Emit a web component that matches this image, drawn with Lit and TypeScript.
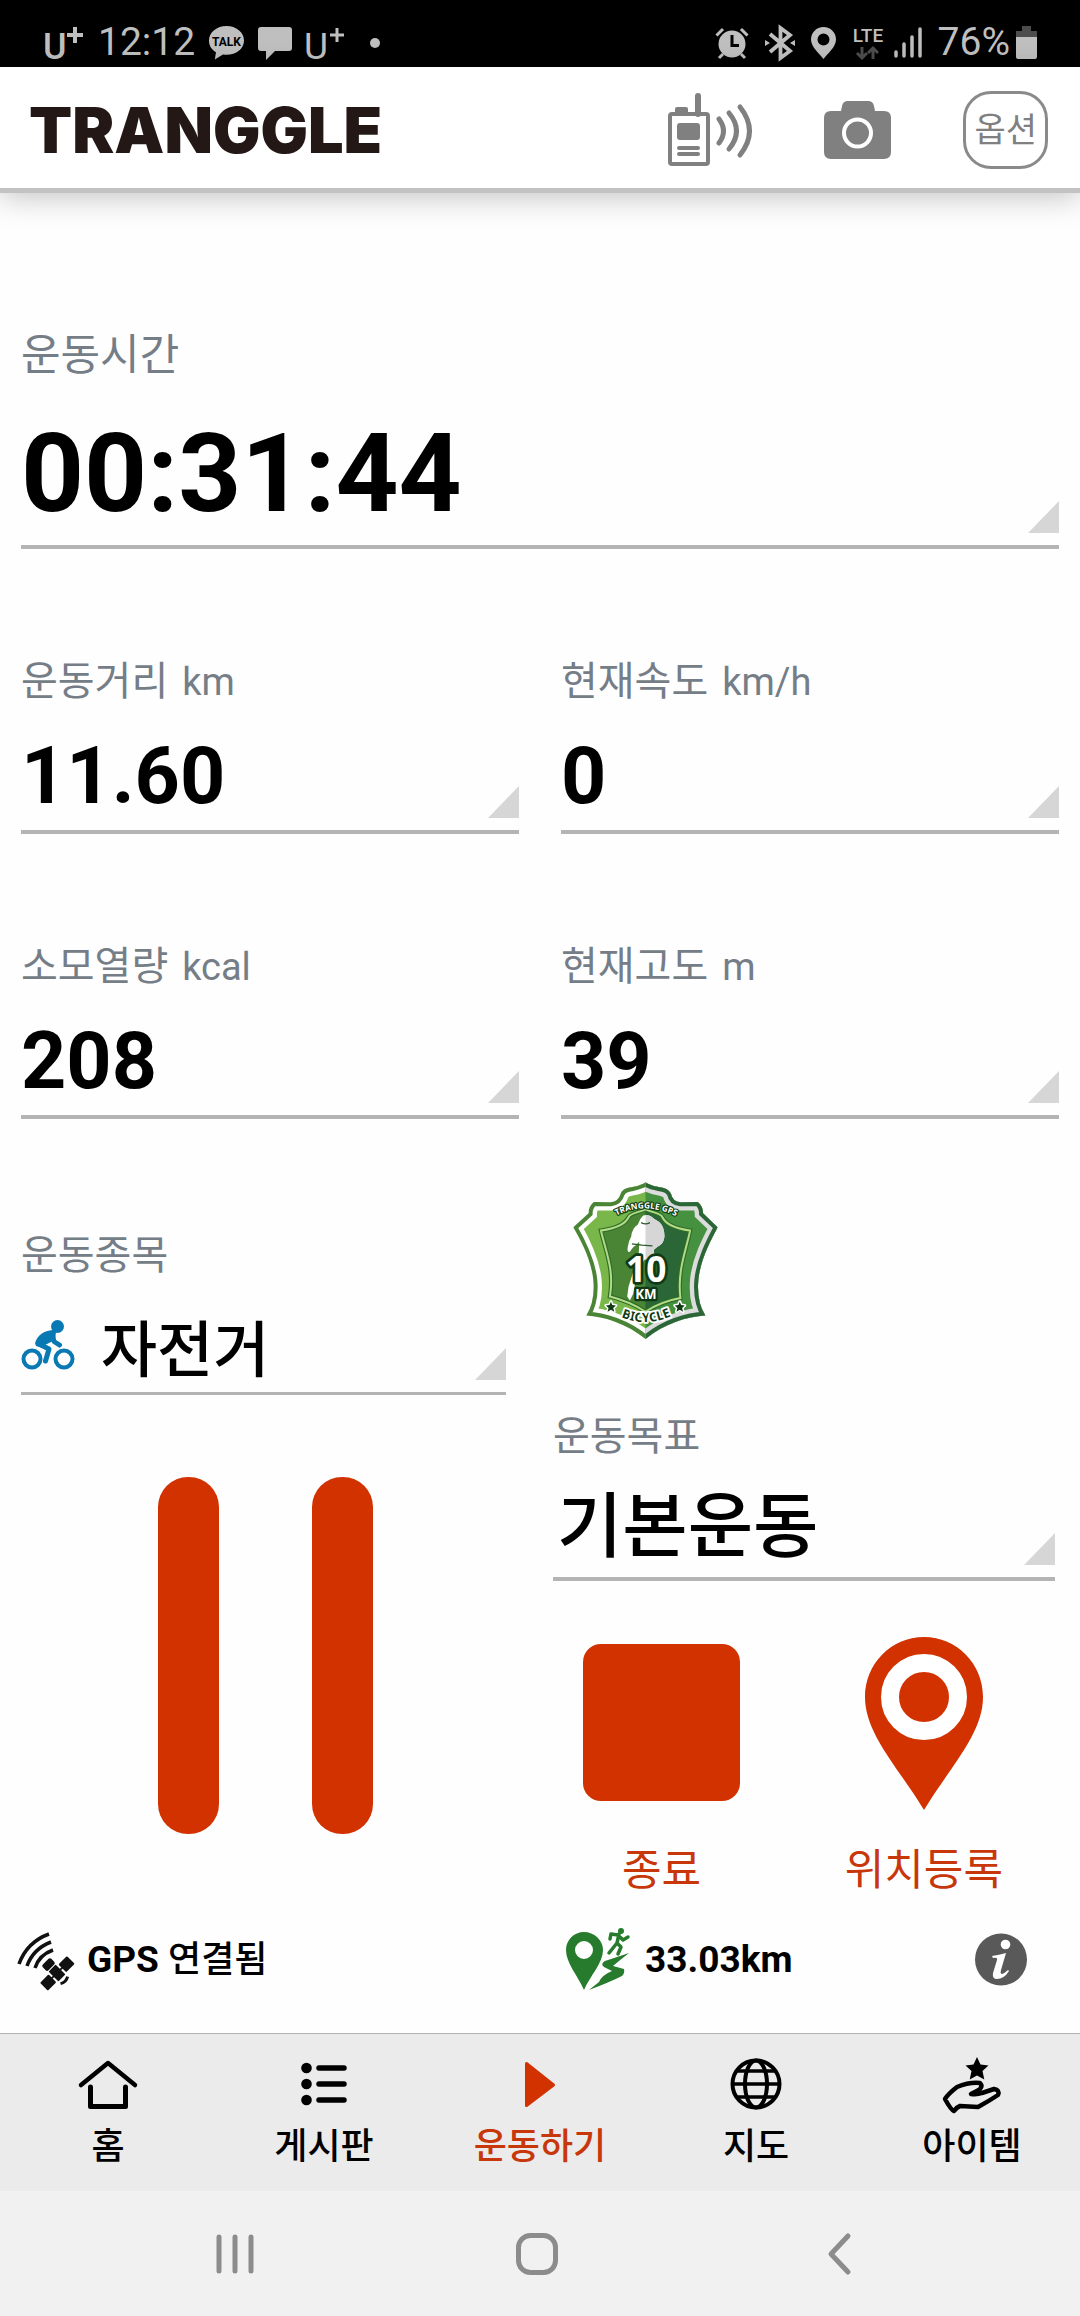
import { LitElement, html, css, nothing } from "lit";
import { customElement, property, state } from "lit/decorators.js";
import { classMap } from "lit/directives/class-map.js";

const reset = css`
  * {
    box-sizing: border-box;
  }
  button {
    margin: 0;
    padding: 0;
    border: 0;
    background: none;
    font: inherit;
    color: inherit;
    text-align: left;
    cursor: pointer;
  }
  svg {
    display: block;
    flex: none;
    overflow: visible;
  }
`;

/* ---------- status bar icons ---------- */

const talkIcon = html`<svg width="35" height="34" viewBox="0 0 35 34" aria-hidden="true">
  <path fill="#bfbfbf" d="M17.500 0C7.800 0 0 6.200 0 14.500c0 5.300 2.600 9.300 7 11.700L5.800 33.500 14 28.500c1.200.2 2.300.3 3.500.3 9.700 0 17.500-6 17.500-14.300S27.200 0 17.500 0z"/>
  <text x="17.500" y="19.500" text-anchor="middle" font-family="Roboto, sans-serif" font-weight="700" font-size="12" fill="#000">TALK</text>
</svg>`;

const chatIcon = html`<svg width="34" height="34" viewBox="0 0 34 34" aria-hidden="true">
  <path fill="#bfbfbf" d="M3 1h28a3 3 0 0 1 3 3v18a3 3 0 0 1-3 3H17L8 34V25H3a3 3 0 0 1-3-3V4a3 3 0 0 1 3-3z"/>
</svg>`;

const alarmIcon = html`<svg width="34" height="32" viewBox="0 0 34 32" aria-hidden="true">
  <g fill="none" stroke="#bfbfbf" stroke-width="3">
    <path d="M1.500 8.500 8 2M26 2l6.500 6.500M8 27l-4 4M26 27l4 4"/>
  </g>
  <circle cx="17" cy="17" r="13.500" fill="#bfbfbf"/>
  <path fill="none" stroke="#000" stroke-width="3" d="M17 8v10.500h7"/>
</svg>`;

const bluetoothIcon = html`<svg width="30" height="34" viewBox="0 0 30 34" aria-hidden="true">
  <path fill="none" stroke="#bfbfbf" stroke-width="3.800" d="M5 8l20 17-9.500 7V2L25 9 5 26"/>
  <path fill="#bfbfbf" d="M0 14l5 3-5 3zM30 14l-5 3 5 3z"/>
</svg>`;

const placeIcon = html`<svg width="25" height="32" viewBox="0 0 25 32" aria-hidden="true">
  <path fill="#bfbfbf" fill-rule="evenodd" d="M12.500 0C5.500 0 0 5.500 0 12.500 0 20 8 26 12.500 32 17 26 25 20 25 12.500 25 5.500 19.500 0 12.500 0zm0 6.500a6 6 0 1 1 0 12 6 6 0 0 1 0-12z"/>
</svg>`;

const lteIcon = html`<svg width="32" height="34" viewBox="0 0 32 34" aria-hidden="true">
  <text x="16" y="16" text-anchor="middle" font-family="Roboto, sans-serif" font-weight="500" font-size="19" fill="#bfbfbf">LTE</text>
  <path fill="none" stroke="#4d4d4d" stroke-width="3" d="M10 21v11M5 27l5 5 5-5M21 33V22M16 27l5-5 5 5"/>
</svg>`;

const signalIcon = html`<svg width="28" height="30" viewBox="0 0 28 30" aria-hidden="true">
  <path fill="none" stroke="#bfbfbf" stroke-width="3.500" stroke-linecap="round" d="M2 24v4M10 16v12M18 9v19M26 1v27"/>
</svg>`;

const batteryIcon = html`<svg width="21" height="33" viewBox="0 0 21 33" aria-hidden="true">
  <path fill="#4d4d4d" d="M6 0h9v5h6v6H0V5h6z"/>
  <path fill="#bfbfbf" d="M0 11h21v20a2 2 0 0 1-2 2H2a2 2 0 0 1-2-2z"/>
</svg>`;

const carrierMark = html`<svg width="40" height="36" viewBox="0 0 40 36" aria-hidden="true">
  <text x="-1" y="34" font-family="Roboto, sans-serif" font-weight="500" font-size="36" fill="#bfbfbf">U</text>
  <path fill="none" stroke="#bfbfbf" stroke-width="4" d="M23 10h16M31 2v16"/>
</svg>`;

const carrierMarkThin = html`<svg width="38" height="34" viewBox="0 0 38 34" aria-hidden="true">
  <text x="-2" y="33" font-family="Roboto, sans-serif" font-size="37" fill="#bfbfbf">U</text>
  <path fill="none" stroke="#bfbfbf" stroke-width="3" d="M24 9h14M31 2v14"/>
</svg>`;

/* ---------- header icons ---------- */

const radioIcon = html`<svg width="84" height="74" viewBox="0 0 84 74" aria-hidden="true">
  <g fill="none" stroke="#808080" stroke-linecap="round">
    <rect x="2" y="21" width="38" height="50" rx="2" stroke-width="4"/>
    <path stroke-width="6" d="M30 3v18"/>
    <path stroke-width="4" d="M11 55h19M11 61h19"/>
    <path stroke-width="5" d="M51 26q9 12 0 24M61 20q15 18 0 36M72 14q19 24 0 48"/>
  </g>
  <path fill="#808080" d="M7 20v-4q0-2 2-2h9q2 0 2 2v4zM9 33q0-3 3-3h17q3 0 3 3v11q0 3-3 3H12q-3 0-3-3z"/>
</svg>`;

const cameraIcon = html`<svg width="67" height="58" viewBox="0 0 67 58" aria-hidden="true">
  <path fill="#808080" d="M7 10h10l1-5q1-5 6-5h20q5 0 6 5l1 5h9q7 0 7 7v34q0 7-7 7H7q-7 0-7-7V17q0-7 7-7z"/>
  <circle cx="33.500" cy="32" r="13.500" fill="none" stroke="#fff" stroke-width="4"/>
</svg>`;

/* ---------- content icons ---------- */

const bikeIcon = html`<svg width="54" height="58" viewBox="0 0 54 58" aria-hidden="true">
  <g fill="none" stroke="#0879b3">
    <circle cx="11" cy="39" r="8.500" stroke-width="4"/>
    <circle cx="43" cy="39" r="8.500" stroke-width="4"/>
    <path stroke-width="5" stroke-linecap="round" stroke-linejoin="round" d="M31 13.500l2 8 5.500 3.500"/>
    <path stroke-width="5" stroke-linecap="round" stroke-linejoin="round" d="M18 24l10 5-3.500 12"/>
  </g>
  <path fill="#0879b3" d="M14 23q4-12 18-13l3 2-1 8-10 5-2 3-7-2z"/>
  <circle cx="36.500" cy="6.500" r="6.500" fill="#0879b3"/>
</svg>`;

const pauseIcon = html`<svg width="215" height="357" viewBox="0 0 215 357" aria-hidden="true">
  <rect width="61" height="357" rx="30" fill="#d23200"/>
  <rect x="154" width="61" height="357" rx="30" fill="#d23200"/>
</svg>`;

const stopIcon = html`<svg width="157" height="173" viewBox="0 0 157 173" aria-hidden="true">
  <rect y="7" width="157" height="157" rx="18" fill="#d23200"/>
</svg>`;

const pinIcon = html`<svg width="118" height="173" viewBox="0 0 118 173" aria-hidden="true">
  <path fill="#d23200" d="M59 0C26 0 0 27 0 60c0 37 33 70 59 113 26-43 59-76 59-113C118 27 92 0 59 0z"/>
  <circle cx="59" cy="60" r="34" fill="none" stroke="#fff" stroke-width="18"/>
</svg>`;

const satelliteIcon = html`<svg width="53" height="54" viewBox="0 0 53 54" aria-hidden="true">
  <g fill="none" stroke="#111" stroke-width="3.500">
    <path d="M1 31Q9 9 31 1M9 33Q15 16 33 9M17 35Q21 22 35 17"/>
  </g>
  <g transform="translate(39 40) rotate(-45)" fill="#111">
    <rect x="-5" y="-7" width="10" height="14" rx="1"/>
    <rect x="-19" y="-5" width="12" height="11" rx="1"/>
    <rect x="7" y="-5" width="12" height="11" rx="1"/>
    <rect x="-9" y="-1" width="18" height="2"/>
    <rect x="-6" y="-16" width="12" height="8" rx="2"/>
    <path fill="none" stroke="#111" stroke-width="3" d="M-5 10q5 3 10 0"/>
  </g>
</svg>`;

const routeIcon = html`<svg width="63" height="63" viewBox="0 0 63 63" aria-hidden="true">
  <path fill="#267b2c" fill-rule="evenodd" d="M18 4C8 4 0 12 0 22c0 13 12 26 18 40 6-14 19-27 19-40C37 12 28 4 18 4zm0 9a9 9 0 1 1 0 18 9 9 0 0 1 0-18z"/>
  <path fill="#267b2c" d="M63 25 39 33Q34 36 38 39L46 43Q36 47 33 54L23 62Q44 54 56 48 59 45 58 41L47 38Q54 32 63 25z"/>
  <circle cx="55" cy="3" r="3" fill="#267b2c"/>
  <path fill="none" stroke="#267b2c" stroke-width="3.500" stroke-linecap="round" stroke-linejoin="round" d="M53 6l-2 9-4 5-4 5M51 15l4 4-3 7M52 7l-7-1-1 5M54 9l3 3 5-3"/>
</svg>`;

const infoIcon = html`<svg width="53" height="53" viewBox="0 0 53 53" aria-hidden="true">
  <circle cx="26" cy="26.500" r="26" fill="#595959"/>
  <circle cx="30.500" cy="11.500" r="4.800" fill="#fff"/>
  <path fill="#fff" d="M17 23q7-1 14-3l-5 17q-1 4 1 4 3-1 6-4l1 1q-5 8-12 8-5 0-4-6l4-13q1-3-4-2z"/>
</svg>`;

const SHIELD =
  "M255 37C285 58 318 44 332 72Q336 94 360 97L412 96Q428 108 428 130L472 172C450 214 420 270 414 330Q408 395 435 437C380 440 310 462 255 508C200 462 130 440 77 437Q104 395 98 330C92 270 62 214 38 172L84 130Q84 108 100 96L150 97Q174 94 180 72C192 44 225 58 255 37Z";
const CREST =
  "M255 118C280 130 300 128 306 142Q320 172 389 182C378 240 350 300 360 385Q300 396 255 426Q210 396 148 380C162 300 134 240 121 182Q190 172 204 142C210 128 230 130 255 118Z";

const badgeIcon = html`<svg width="145" height="157" viewBox="38 36 434 472" role="img" aria-label="TRANGGLE GPS 10 KM BICYCLE">
  <defs>
    <clipPath id="right-half"><rect x="255" y="30" width="230" height="490"/></clipPath>
    <clipPath id="outline"><path d=${SHIELD}/></clipPath>
    <path id="arc-top" d="M158 142Q255 88 356 144"/>
    <path id="arc-bottom" d="M164 434Q255 482 350 430"/>
    <path id="rider" d="M248 137Q262 132 272 140 280 148 296 156 312 170 312 200 310 222 292 230L280 240 282 262 252 270 232 300 228 320 218 372 208 392 200 380 204 350 234 258Q236 240 236 216 228 226 218 232 212 240 208 246 198 248 202 230 204 214 212 200 214 176 232 164 238 146 248 137Z"/>
  </defs>
  <g clip-path="url(#outline)">
    <path d=${SHIELD} fill="#79b74b" stroke="#fff" stroke-width="50"/>
    <path d=${SHIELD} fill="none" stroke="#4a8435" stroke-width="24"/>
    <g clip-path="url(#right-half)">
      <path d=${SHIELD} fill="#46913f" stroke="#dcdcdc" stroke-width="50"/>
      <path d=${SHIELD} fill="none" stroke="#2b6637" stroke-width="24"/>
    </g>
  </g>
  <path d=${CREST} fill="#4a8536"/>
  <path d=${CREST} fill="#2b6637" clip-path="url(#right-half)"/>
  <path d=${CREST} fill="none" stroke="#2f6d2c" stroke-width="13"/>
  <path d=${CREST} fill="none" stroke="#b3db84" stroke-width="6"/>
  <use href="#rider" fill="#fff"/>
  <use href="#rider" fill="#d6d6d6" clip-path="url(#right-half)"/>
  <path fill="none" stroke="#2b5a2c" stroke-width="4" d="M214 222l30 4 32 2M242 158q14 8 26 0"/>
  <g font-family="'Noto Sans', sans-serif" font-weight="700" text-anchor="middle" stroke-linejoin="round" paint-order="stroke">
    <text font-size="25" fill="#fff" stroke="#123f16" stroke-width="7"><textPath href="#arc-top" startOffset="50%">TRANGGLE GPS</textPath></text>
    <text x="257" y="338" font-size="106" fill="#fff" stroke="#0f3a14" stroke-width="16">10</text>
    <text x="256" y="389" font-size="40" fill="#fff" stroke="#0f3a14" stroke-width="14">KM</text>
    <text font-size="38" fill="#0f3a14" stroke="#fff" stroke-width="11"><textPath href="#arc-bottom" startOffset="50%">BICYCLE</textPath></text>
  </g>
  <g fill="#0f3a14" stroke="#fff" stroke-width="9" stroke-linejoin="round" paint-order="stroke">
    <path id="star" d="M151 396l4 10 11 1-8 8 3 11-10-6-10 6 3-11-8-8 11-1z"/>
    <use href="#star" x="207"/>
  </g>
</svg>`;

/* ---------- tab icons ---------- */

const homeIcon = html`<svg width="58" height="54" viewBox="0 0 58 54" aria-hidden="true">
  <g fill="none" stroke="#000" stroke-width="4.500" stroke-linecap="round" stroke-linejoin="round">
    <path d="M2 28 29 6l27 22"/>
    <path stroke-width="5" d="M11.500 30v19.500h35V30"/>
  </g>
</svg>`;

const listIcon = html`<svg width="46" height="54" viewBox="0 0 46 54" aria-hidden="true">
  <circle cx="5.500" cy="11" r="5.300"/><circle cx="5.500" cy="27" r="5.300"/><circle cx="5.500" cy="43" r="5.300"/>
  <path fill="none" stroke="#000" stroke-width="5.500" stroke-linecap="round" d="M18 11h25M18 27h25M18 43h25"/>
</svg>`;

const playIcon = html`<svg width="30" height="54" viewBox="0 0 30 54" aria-hidden="true">
  <path fill="#d23200" stroke="#d23200" stroke-width="3" stroke-linejoin="round" d="M1.500 6.500 28.500 28 1.500 48.500z"/>
</svg>`;

const globeIcon = html`<svg width="52" height="54" viewBox="0 0 52 54" aria-hidden="true">
  <g fill="none" stroke="#000" stroke-width="4">
    <circle cx="26" cy="27" r="23.500"/>
    <ellipse cx="26" cy="27" rx="11" ry="23.500"/>
    <path stroke-width="3.500" d="M3 27h46M6 14h40M6 40h40"/>
  </g>
</svg>`;

const handIcon = html`<svg width="58" height="54" viewBox="0 0 58 54" aria-hidden="true">
  <path d="M34 0l3.500 7.500 8 1-6 5.500 1.800 8.500L34 18.500l-7.300 4L28.500 14l-6-5.500 8-1z"/>
  <path fill="none" stroke="#000" stroke-width="4.500" stroke-linejoin="round" stroke-linecap="round" d="M2 42Q5 37 14 30 26 25 37 26 40 29 37 32 34 34 28 37 34 38 39 36L51 32Q57 33 55 38 46 44 35 50L17 49Q14 50 11 54 8 53 2 42z"/>
</svg>`;

/** A labelled read-out, underlined, with a corner mark that shows it can be changed. */
@customElement("metric-field")
export class MetricField extends LitElement {
  @property() label = "";
  @property() unit = "";
  @property() value = "";
  @property() kind: "hero" | "stat" | "sport" | "goal" = "stat";
  @property({ attribute: false }) icon: unknown = nothing;

  static styles = [
    reset,
    css`
      :host {
        display: block;
      }
      .field {
        display: block;
        width: 100%;
        border-bottom: 4px solid #b4b4b4;
      }
      .label {
        display: block;
        font-size: 40px;
        line-height: 60px;
        color: #757d87;
      }
      .unit {
        margin-left: 4px;
        font-size: 38px;
      }
      .row {
        display: flex;
        align-items: center;
        padding-top: 14px;
        padding-bottom: 4px;
        color: #000;
      }
      .value {
        flex: 1;
        font-size: 79px;
        line-height: 100px;
        font-weight: 700;
      }
      .corner {
        align-self: flex-end;
        margin-bottom: 8px;
      }
      .hero .label {
        font-size: 43px;
      }
      .hero .row {
        padding-top: 22px;
      }
      .hero .value {
        font-size: 110px;
        line-height: 134px;
      }
      .sport {
        border-bottom-width: 3px;
      }
      .sport .row {
        gap: 26px;
        padding-top: 24px;
      }
      .sport .corner {
        margin-bottom: 8px;
      }
      .sport .value {
        padding-top: 4px;
        font-size: 61px;
        line-height: 74px;
        font-weight: 500;
      }
      .goal .row {
        padding-left: 4px;
      }
      .goal .value {
        font-size: 71px;
        line-height: 92px;
        font-weight: 500;
      }
    `,
  ];

  render() {
    return html`<button class="field ${this.kind}" type="button">
      <span class="label">${this.label}${this.unit ? html` <span class="unit">${this.unit}</span>` : nothing}</span>
      <span class="row">
        ${this.icon}
        <span class="value">${this.value}</span>
        <svg class="corner" width="31" height="32" viewBox="0 0 31 32" aria-hidden="true">
          <path fill="#d6d6d6" d="M31 0v32H0z"/>
        </svg>
      </span>
    </button>`;
  }
}

@customElement("app-root")
export class AppRoot extends LitElement {
  @state() private tab = "운동하기";

  private tabs = [
    { name: "홈", icon: homeIcon },
    { name: "게시판", icon: listIcon },
    { name: "운동하기", icon: playIcon },
    { name: "지도", icon: globeIcon },
    { name: "아이템", icon: handIcon },
  ];

  static styles = [
    reset,
    css`
      :host {
        display: flex;
        flex-direction: column;
        min-height: 100vh;
        background: #fefefe;
        color: #000;
        font-family: Roboto, "Noto Sans CJK KR", sans-serif;
      }
      .status {
        display: flex;
        justify-content: space-between;
        padding: 18px 43px 0 44px;
        background: #000;
        color: #bfbfbf;
        font-size: 39px;
        line-height: 49px;
      }
      .status-side {
        display: flex;
        align-items: center;
        gap: 14px;
      }
      .status-side.end {
        gap: 16px;
      }
      .dot {
        width: 10px;
        height: 10px;
        margin-left: 12px;
        border-radius: 50%;
        background: #bfbfbf;
      }
      .level {
        display: flex;
        align-items: center;
        gap: 6px;
      }
      .radio-state {
        display: flex;
        align-items: center;
        gap: 10px;
      }
      .header {
        display: flex;
        align-items: center;
        justify-content: space-between;
        padding: 24px 32px 19px 29px;
        background: #fff;
        box-shadow: 0 5px 0 #c2c2c2, 0 8px 30px rgba(0, 0, 0, 0.25);
      }
      .logo {
        margin: 0;
        font-family: Inter, "Liberation Sans", sans-serif;
        font-size: 63px;
        line-height: 78px;
        font-weight: 900;
        color: #231815;
      }
      .tools {
        display: flex;
        align-items: center;
        gap: 72px;
      }
      .option {
        padding: 0 8px;
        border: 3px solid #8a8a8a;
        border-radius: 28px;
        font-size: 34px;
        line-height: 72px;
        color: #808080;
      }
      .main {
        flex: 1;
        padding-top: 137px;
      }
      .stats {
        display: grid;
        grid-template-columns: 1fr 1fr;
        gap: 103px 42px;
        padding: 0 21px;
      }
      .wide {
        grid-column: 1 / -1;
      }
      .session {
        display: grid;
        grid-template-columns: 485fr 502fr;
        gap: 47px;
        padding: 0 25px 0 21px;
      }
      .left {
        padding-top: 107px;
      }
      .pause {
        display: block;
        margin: 82px auto 0;
        padding-left: 4px;
      }
      .right {
        padding-top: 63px;
      }
      .badge {
        display: block;
        margin: 0 0 68px 20px;
      }
      .actions {
        display: flex;
        justify-content: space-between;
        padding: 56px 52px 0 30px;
      }
      .action {
        display: flex;
        flex-direction: column;
        align-items: center;
        gap: 30px;
        font-size: 43px;
        line-height: 60px;
        color: #c8370a;
      }
      .info {
        display: grid;
        grid-template-columns: 1fr 1fr;
        padding: 28px 0 42px;
        font-size: 37px;
        line-height: 62px;
        font-weight: 700;
      }
      .gps {
        display: flex;
        align-items: center;
        gap: 16px;
        padding-left: 18px;
      }
      .state {
        font-size: 36px;
        font-weight: 500;
      }
      .distance {
        display: flex;
        align-items: center;
        gap: 16px;
        padding: 0 52px 0 26px;
      }
      .grow {
        flex: 1;
      }
      .tabs {
        display: grid;
        grid-template-columns: repeat(5, 1fr);
        border-top: 1px solid #b0b4b0;
        background: #ebebeb;
      }
      .tab {
        display: flex;
        flex-direction: column;
        align-items: center;
        gap: 14px;
        padding: 23px 0 22px;
        font-size: 36px;
        line-height: 44px;
        font-weight: 500;
      }
      .tab.on {
        color: #c8370a;
      }
      .system {
        display: grid;
        grid-template-columns: repeat(3, 1fr);
        padding: 0 90px 0 84px;
        background: #f1f1f1;
      }
      .key {
        display: flex;
        justify-content: center;
        padding: 42px 0;
      }
    `,
  ];

  render() {
    return html`
      <div class="status">
        <div class="status-side">
          ${carrierMark}<span>12:12</span>${talkIcon}${chatIcon}${carrierMarkThin}<span class="dot"></span>
        </div>
        <div class="status-side end">
          ${alarmIcon}${bluetoothIcon}${placeIcon}
          <span class="radio-state">${lteIcon}${signalIcon}</span>
          <span class="level"><span>76%</span>${batteryIcon}</span>
        </div>
      </div>

      <header class="header">
        <h1 class="logo">TRANGGLE</h1>
        <div class="tools">
          <button type="button" aria-label="무전">${radioIcon}</button>
          <button type="button" aria-label="카메라">${cameraIcon}</button>
          <button type="button" class="option">옵션</button>
        </div>
      </header>

      <main class="main">
        <section class="stats">
          <metric-field class="wide" kind="hero" label="운동시간" value="00:31:44"></metric-field>
          <metric-field label="운동거리" unit="km" value="11.60"></metric-field>
          <metric-field label="현재속도" unit="km/h" value="0"></metric-field>
          <metric-field label="소모열량" unit="kcal" value="208"></metric-field>
          <metric-field label="현재고도" unit="m" value="39"></metric-field>
        </section>

        <section class="session">
          <div class="left">
            <metric-field kind="sport" label="운동종목" value="자전거" .icon=${bikeIcon}></metric-field>
            <button type="button" class="pause" aria-label="일시정지">${pauseIcon}</button>
          </div>
          <div class="right">
            <button type="button" class="badge">${badgeIcon}</button>
            <metric-field kind="goal" label="운동목표" value="기본운동"></metric-field>
            <div class="actions">
              <button type="button" class="action">${stopIcon}<span>종료</span></button>
              <button type="button" class="action">${pinIcon}<span>위치등록</span></button>
            </div>
          </div>
        </section>

        <section class="info">
          <div class="gps">${satelliteIcon}<span>GPS <span class="state">연결됨</span></span></div>
          <div class="distance">
            ${routeIcon}<span class="grow">33.03km</span>
            <button type="button" aria-label="정보">${infoIcon}</button>
          </div>
        </section>
      </main>

      <nav class="tabs">
        ${this.tabs.map(
          (t) => html`<button
            type="button"
            class=${classMap({ tab: true, on: t.name === this.tab })}
            @click=${() => (this.tab = t.name)}
          >
            ${t.icon}<span>${t.name}</span>
          </button>`
        )}
      </nav>

      <div class="system">
        <button type="button" class="key" aria-label="최근 앱">
          <svg width="42" height="42" viewBox="0 0 42 42"><path fill="none" stroke="#8c8c8c" stroke-width="5" stroke-linecap="round" d="M5 4v34M21 4v34M37 4v34"/></svg>
        </button>
        <button type="button" class="key" aria-label="홈 화면">
          <svg width="42" height="42" viewBox="0 0 42 42"><rect x="2.500" y="2.500" width="37" height="37" rx="12" fill="none" stroke="#8c8c8c" stroke-width="5"/></svg>
        </button>
        <button type="button" class="key" aria-label="뒤로">
          <svg width="24" height="42" viewBox="0 0 24 42"><path fill="none" stroke="#8c8c8c" stroke-width="5" stroke-linecap="round" stroke-linejoin="round" d="M21 3 4 21l17 18"/></svg>
        </button>
      </div>
    `;
  }
}
